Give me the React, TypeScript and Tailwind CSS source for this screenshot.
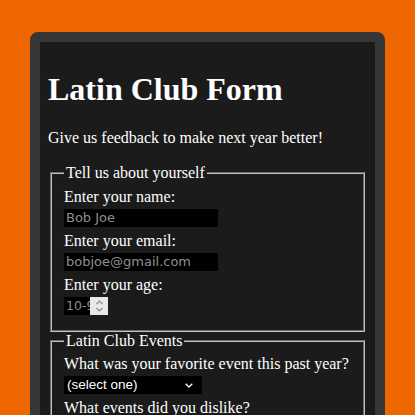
import * as React from "react"

function TextField({ value, width = "w-[154px]" }: { value: string; width?: string }) {
  return (
    <input
      readOnly
      value={value}
      className={`mt-[3px] mb-[5px] block h-[18px] ${width} bg-black px-[2px] font-['DejaVu_Sans',sans-serif] text-[13px] leading-[18px] text-[#8f8f8f] outline-none`}
    />
  )
}

function NumberField({ value }: { value: string }) {
  return (
    <div className="relative mt-[3px] mb-[5px] h-[18px] w-[44px] overflow-hidden bg-black">
      <span className="block whitespace-nowrap pl-[2px] font-['DejaVu_Sans',sans-serif] text-[12.5px] leading-[18px] text-[#8f8f8f]">
        {value}
      </span>
      {/* spin buttons sit over the end of the value, as in the browser */}
      <div className="absolute top-0 right-0 flex h-[18px] w-[18px] items-center justify-center bg-[#e9e9ed]">
        <svg width="9" height="14" viewBox="0 0 9 14" fill="none" stroke="#8a8a8a" strokeWidth="1.2">
          <path d="M1.5 5 L4.5 2 L7.5 5" />
          <path d="M1.5 9 L4.5 12 L7.5 9" />
        </svg>
      </div>
    </div>
  )
}

function SelectField({ label }: { label: string }) {
  return (
    <div className="mt-[3px] mb-[5px] flex h-[18px] w-[138px] items-center justify-between bg-black pl-[3px] pr-[9px] font-['Liberation_Sans',sans-serif] text-[13.5px] text-white">
      <span className="leading-[18px]">{label}</span>
      <svg width="8" height="5" viewBox="0 0 8 5" fill="none" stroke="white" strokeWidth="1.3">
        <path d="M0.7 0.7 L4 4 L7.3 0.7" />
      </svg>
    </div>
  )
}

function Label({ children }: { children: React.ReactNode }) {
  return <label className="block text-[16px] leading-[18px]">{children}</label>
}

export default function App() {
  return (
    <div className="min-h-screen bg-[#ee6600] px-[30px] pt-[32px]">
      <div className="rounded-[8px] border-[10px] border-[#363636] bg-[#1b1b1b] p-[8px] font-['Liberation_Serif',serif] text-white">
        <h1 className="my-[21px] text-[32px] font-bold leading-[37px]">Latin Club Form</h1>
        <p className="mb-[17px] text-[16px] leading-[18px]">Give us feedback to make next year better!</p>

        <fieldset className="mx-[2px] border-2 border-[#c0c0c0] px-[12px] pt-[5.6px] pb-[10px] [border-style:groove]">
          <legend className="px-[2px] text-[16px] leading-[18px]">Tell us about yourself</legend>
          <Label>Enter your name:</Label>
          <TextField value="Bob Joe" />
          <Label>Enter your email:</Label>
          <TextField value="bobjoe@gmail.com" />
          <Label>Enter your age:</Label>
          <NumberField value="10-99" />
        </fieldset>

        <fieldset className="mx-[2px] border-2 border-[#c0c0c0] px-[12px] pt-[5.6px] pb-[10px] [border-style:groove]">
          <legend className="px-[2px] text-[16px] leading-[18px]">Latin Club Events</legend>
          <Label>What was your favorite event this past year?</Label>
          <SelectField label="(select one)" />
          <Label>What events did you dislike?</Label>
          <div className="mt-[3px] mb-[5px] flex flex-col gap-[2px]">
            <span className="text-[16px] leading-[18px]">Saturnalia</span>
            <span className="text-[16px] leading-[18px]">Certamen</span>
          </div>
        </fieldset>
      </div>
    </div>
  )
}
